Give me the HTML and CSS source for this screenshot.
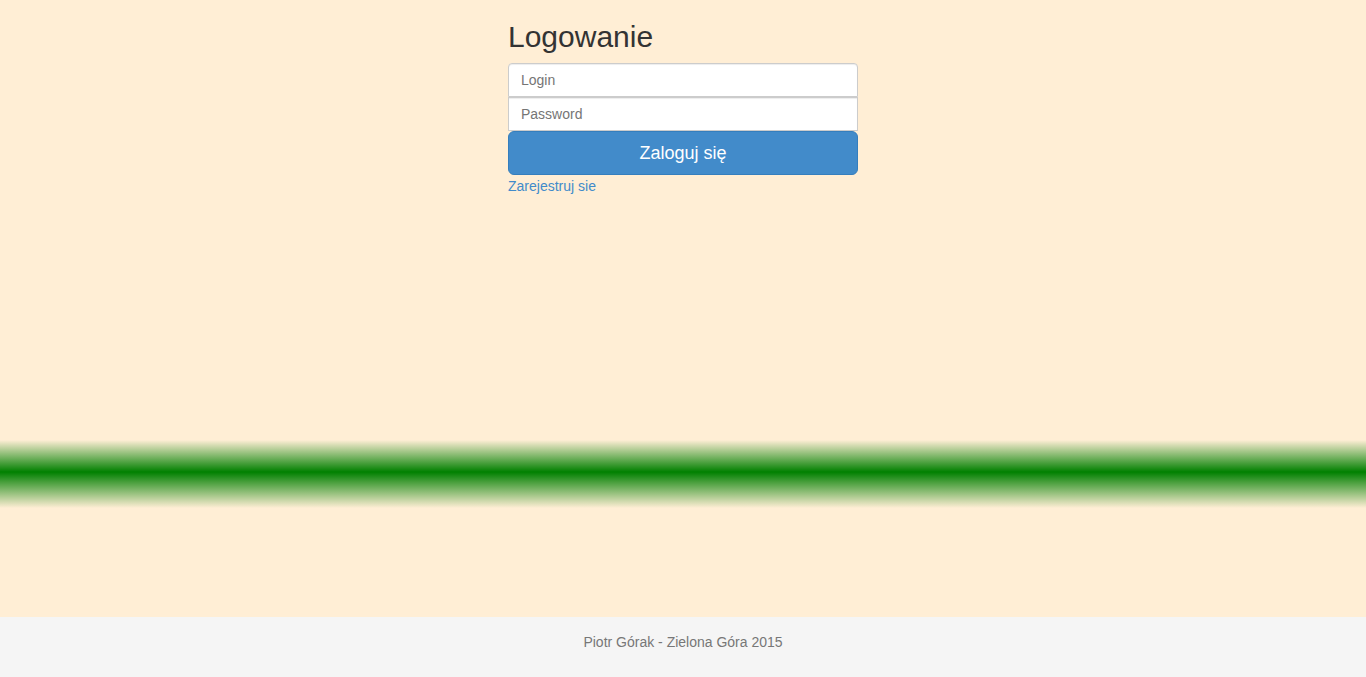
FILE: index.html
```html
<!DOCTYPE html>
<html lang="pl">
<head>
<meta charset="utf-8">
<title>Logowanie</title>
<link rel="stylesheet" href="styles.css">
</head>
<body>
<div class="page">
  <main class="container">
    <form class="signin">
      <h2 class="signin-heading">Logowanie</h2>
      <input class="form-control top" type="text" placeholder="Login">
      <input class="form-control bottom" type="password" placeholder="Password">
      <button class="btn" type="button">Zaloguj się</button>
      <a class="register" href="#">Zarejestruj sie</a>
    </form>
  </main>
  <div class="band"></div>
  <footer class="footer">
    <p>Piotr Górak - Zielona Góra 2015</p>
  </footer>
</div>
</body>
</html>
```
FILE: styles.css
```css
* { box-sizing: border-box; }
html, body { margin: 0; padding: 0; height: 100%; }
body {
  background: #ffeed5;
  font-family: "Liberation Sans", Arial, sans-serif;
  font-size: 14px;
  line-height: 1.428571;
  color: #333;
}
.page {
  min-height: 100%;
  display: flex;
  flex-direction: column;
}
.container {
  width: 350px;
  margin: 0 auto;
}
.signin {
  display: flex;
  flex-direction: column;
}
.signin-heading {
  margin: 20px 0 10px;
  font-size: 30px;
  font-weight: 500;
  line-height: 1.1;
  color: #333;
}
.form-control {
  display: block;
  width: 100%;
  height: 34px;
  padding: 6px 12px;
  font-family: inherit;
  font-size: 14px;
  color: #555;
  background: #fff;
  border: 1px solid #ccc;
  border-radius: 4px;
  box-shadow: inset 0 1px 1px rgba(0,0,0,0.075);
  outline: none;
}
.form-control::placeholder { color: #757575; }
.form-control.top { border-bottom-left-radius: 0; border-bottom-right-radius: 0; }
.form-control.bottom { border-radius: 0; }
.btn {
  display: block;
  width: 100%;
  height: 44px;
  padding: 10px 16px;
  font-family: inherit;
  font-size: 18px;
  line-height: 1.33;
  color: #fff;
  background: #428bca;
  border: 1px solid #357ebd;
  border-radius: 6px;
  cursor: pointer;
}
.register {
  color: #428bca;
  text-decoration: none;
  line-height: 20px;
  padding-top: 1px;
  align-self: flex-start;
}
.band {
  margin-top: 244px;
  height: 68px;
  background: linear-gradient(to bottom, rgba(0,128,0,0) 0%, #008000 47%, rgba(0,128,0,0) 100%);
}
.footer {
  margin-top: auto;
  height: 60px;
  padding-top: 15px;
  background: #f5f5f5;
  text-align: center;
}
.footer p {
  margin: 0;
  color: #777;
  font-size: 14px;
  line-height: 20px;
}
```
